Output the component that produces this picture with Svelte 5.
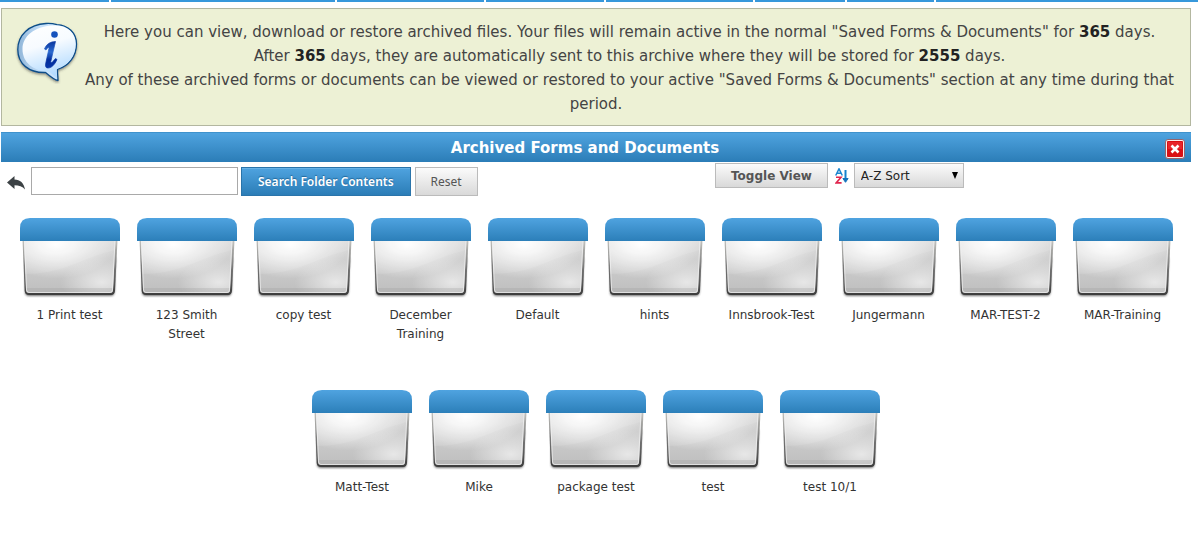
<script lang="ts">
  type Folder = { id: number; name: string };

  const names = [
    "1 Print test", "123 Smith Street", "copy test", "December Training", "Default",
    "hints", "Innsbrook-Test", "Jungermann", "MAR-TEST-2", "MAR-Training",
    "Matt-Test", "Mike", "package test", "test", "test 10/1",
  ];
  const allFolders: Folder[] = names.map((name, id) => ({ id, name }));

  let query = $state("");
  let applied = $state("");
  let sort = $state("az");
  let listView = $state(false);
  let open = $state(true);

  let folders = $derived.by(() => {
    const found = allFolders.filter((f) => f.name.toLowerCase().includes(applied.toLowerCase()));
    return sort === "za" ? found.reverse() : found;
  });

  function search(e: SubmitEvent) {
    e.preventDefault();
    applied = query.trim();
  }

  function reset() {
    query = "";
    applied = "";
  }
</script>

<div class="nav-edge">
  {#each Array(8) as _}<span></span>{/each}
</div>

<main class="page">
  <section class="notice">
    <svg class="notice-icon" viewBox="0 0 64 64" aria-hidden="true">
      <defs>
        <linearGradient id="bubble" x1="0" y1="0" x2="0.3" y2="1">
          <stop offset="0" stop-color="#fff" />
          <stop offset="0.45" stop-color="#f7fbff" />
          <stop offset="1" stop-color="#b5dcff" />
        </linearGradient>
        <linearGradient id="rim" x1="0" y1="0" x2="1" y2="0">
          <stop offset="0" stop-color="#8fb5d8" />
          <stop offset="0.4" stop-color="#c5e0fa" />
          <stop offset="1" stop-color="#d5eaff" />
        </linearGradient>
        <linearGradient id="letter" x1="0" y1="0" x2="0" y2="1">
          <stop offset="0" stop-color="#0a37a0" />
          <stop offset="0.4" stop-color="#2b6ad0" />
          <stop offset="0.7" stop-color="#002c9c" />
          <stop offset="1" stop-color="#0736a8" />
        </linearGradient>
        <filter id="drop" x="-20%" y="-20%" width="140%" height="140%">
          <feDropShadow dx="0" dy="1.5" stdDeviation="1" flood-color="#333" flood-opacity="0.5" />
        </filter>
      </defs>
      <path filter="url(#drop)" fill="url(#rim)" stroke="#0c4d88" stroke-width="1.3" stroke-linejoin="round"
        d="M31 3.500C36 3.200 39 3.800 42 4.600C53 5 61.500 13 61.500 24C61.500 36 54 46 42.500 49.500C42.300 53 43 56.500 43 60.500C39.500 60 34 55.500 30.500 52.500C14 53 2.800 44 2.800 29.500C2.800 15 14 4.500 31 3.500Z" />
      <path fill="url(#bubble)"
        d="M37 5.500C51 4.300 60.500 12 60.500 24C60.500 36 53 45.500 41.300 48.800L42 58.500L34 51.500C18 51 7.500 42.500 7.500 29C7.500 16 20 6.500 37 5.500Z" />
      <circle cx="39.500" cy="14.500" r="3.300" fill="#1653bd" />
      <path fill="url(#letter)" stroke="url(#letter)" stroke-width="0.7" stroke-linejoin="round"
        d="M29.500 29C31.500 24 35 21.800 40.500 21.500L35.800 41.500C35.400 43.500 37 43 40.500 38.500L42 39.500C39.500 45 36.500 48 32.800 48C30.500 48 30.200 45.800 30.800 43L34 28.300C34.300 26.500 32.500 27.500 31 30Z" />
    </svg>
    <p>
      Here you can view, download or restore archived files. Your files will remain active in the normal "Saved Forms &amp; Documents" for <strong>365</strong> days.<br />
      After <strong>365</strong> days, they are automatically sent to this archive where they will be stored for <strong>2555</strong> days.<br />
      Any of these archived forms or documents can be viewed or restored to your active "Saved Forms &amp; Documents" section at any time during that period.
    </p>
  </section>

  {#if open}
    <header class="title-bar">
      <h1>Archived Forms and Documents</h1>
      <button class="close" type="button" aria-label="Close" onclick={() => (open = false)}>
        <svg viewBox="0 0 20 20" aria-hidden="true">
          <rect x="0.500" y="0.500" width="19" height="19" rx="2.500" fill="#f8eeee" stroke="#94646c" />
          <rect x="2" y="2" width="16" height="16" rx="1" fill="#d90f14" />
          <rect x="3" y="3" width="14" height="7" fill="#f0333a" opacity="0.6" />
          <path d="M6.500 6.500L13.500 13.500M13.500 6.500L6.500 13.500" stroke="#fff" stroke-width="2.600" />
        </svg>
      </button>
    </header>

    <div class="toolbar">
      <form class="search" onsubmit={search}>
        <button class="back" type="button" aria-label="Back">
          <svg viewBox="0 0 18 14" aria-hidden="true">
            <path fill="#3c4245" d="M0 6.500L7.500 0V3.500C13 3.500 17 7 18 13.500C15.500 10.300 12 9.300 7.500 9.300V13Z" />
          </svg>
        </button>
        <input type="text" aria-label="Search folder contents" bind:value={query} />
        <button class="btn primary" type="submit">Search Folder Contents</button>
        <button class="btn plain reset" type="button" onclick={reset}>Reset</button>
      </form>
      <div class="view">
        <button class="btn plain toggle" type="button" onclick={() => (listView = !listView)}>Toggle View</button>
        <svg class="sort-icon" viewBox="0 0 14 16" aria-hidden="true">
          <path d="M0.700 7.500L4 0.800L7.300 7.500M1.900 5.300H6.100" fill="none" stroke="#1b86cf" stroke-width="1.500" />
          <path d="M1 9.300H6L1.200 14.900H6.600" fill="none" stroke="#e0264e" stroke-width="1.600" />
          <path d="M10.500 2V12" stroke="#1683cd" stroke-width="2" />
          <path d="M7.900 10.500L10.500 14.300L13.100 10.500Z" fill="#1673bd" stroke="#1673bd" />
        </svg>
        <div class="select">
          <select aria-label="Sort order" bind:value={sort}>
            <option value="az">A-Z Sort</option>
            <option value="za">Z-A Sort</option>
          </select>
        </div>
      </div>
    </div>

    <svg class="defs" aria-hidden="true">
      <defs>
        <linearGradient id="lid" x1="0" y1="0" x2="0" y2="1">
          <stop offset="0" stop-color="#4fa3e0" />
          <stop offset="1" stop-color="#2c7fb9" />
        </linearGradient>
        <linearGradient id="bin" x1="0" y1="0" x2="0" y2="1">
          <stop offset="0" stop-color="#dcdcdc" />
          <stop offset="0.6" stop-color="#c8c8c8" />
          <stop offset="1" stop-color="#bfbfbf" />
        </linearGradient>
        <radialGradient id="shine" cx="0.35" cy="0.08" r="0.65">
          <stop offset="0" stop-color="#fff" />
          <stop offset="0.3" stop-color="#fff" stop-opacity="0.75" />
          <stop offset="1" stop-color="#fff" stop-opacity="0" />
        </radialGradient>
        <radialGradient id="glow" cx="0.85" cy="0.8" r="0.45">
          <stop offset="0" stop-color="#fff" stop-opacity="0.6" />
          <stop offset="1" stop-color="#fff" stop-opacity="0" />
        </radialGradient>
        <linearGradient id="edge" x1="0" y1="0" x2="0" y2="1">
          <stop offset="0" stop-color="#c4c4c0" />
          <stop offset="0.5" stop-color="#777" />
          <stop offset="1" stop-color="#3c3c3c" />
        </linearGradient>
        <filter id="soft" x="-10%" y="-10%" width="120%" height="120%">
          <feGaussianBlur stdDeviation="0.900" />
        </filter>
      </defs>
    </svg>

    <ul class="folders" class:list={listView}>
      {#each folders as folder (folder.id)}
        <li>
          <a href="#folder-{folder.id}">
            <svg viewBox="0 0 100 80" aria-hidden="true">
              <path fill="#333" opacity="0.7" filter="url(#soft)" d="M5 40H95.500L94.500 74Q94 78 91 78H9Q5 78 5 74Z" />
              <path fill="url(#edge)" d="M2.500 22H97.500L95 73Q94.500 77 91 77H9Q5 77 4.700 73Z" />
              <path fill="url(#bin)" d="M4 22H95.500L93 72Q93 75 90 75H9Q6 75 6 72Z" />
              <path fill="url(#shine)" d="M4 22H95.500L93 72Q93 75 90 75H9Q6 75 6 72Z" />
              <path fill="url(#glow)" d="M4 22H95.500L93 72Q93 75 90 75H9Q6 75 6 72Z" />
              <path fill="#fff" opacity="0.1" d="M4 22H95.500L95 32Q75 37 55 46Q30 56 5 56Z" />
              <path fill="#999" opacity="0.25" d="M6 70H93V72Q93 75 90 75H9Q6 75 6 72Z" />
              <path fill="none" stroke="#f2f2f2" opacity="0.7" d="M4.500 23L6.500 72Q7 74.500 9 74.500H90Q92.500 74.500 92.500 72L95 23" />
              <path fill="url(#lid)" d="M0 23V10Q0 0 10 0H90Q100 0 100 10V23Z" />
            </svg>
            <span>{folder.name}</span>
          </a>
        </li>
      {/each}
    </ul>
  {/if}
</main>

<style>
  :global(body) {
    background: #fff;
    font-family: Verdana, "DejaVu Sans", sans-serif;
    font-size: 12px;
    color: #333;
  }
  .nav-edge {
    display: grid; gap: 2px; height: 2px;
    grid-template-columns: 109fr 224fr 147fr 118fr 147fr 90fr 87fr 262fr;
  }
  .nav-edge span { background: #3798db; }
  .page { margin: 6px 7px 0 1px; }

  .notice {
    background: #edf1d5; border: 1px solid #b3b7a0;
    padding: 11px 10px 9px;
  }
  .notice-icon { float: left; width: 64px; height: 64px; margin-left: 3px; }
  .notice p {
    margin: 0; font-size: 15px; line-height: 24px;
    text-align: center; color: #444;
  }
  .notice strong { color: #222; }

  .title-bar {
    display: flex; align-items: center;
    height: 30px; margin-top: 6px; padding: 0 6px 0 4px; box-sizing: border-box;
    border-top: 1px solid #3f92cc;
    background: linear-gradient(#4fa3df, #2b7db7);
  }
  h1 {
    flex: 1; margin: 0; text-align: center;
    font-size: 15px; line-height: 20px; color: #fff;
  }
  .close {
    width: 20px; height: 20px; margin-top: 2px;
    padding: 0; border: 0; background: none; cursor: pointer;
  }
  .close svg, .back svg { display: block; width: 100%; }

  .toolbar { display: grid; grid-template-columns: 3fr 2fr; align-items: start; }
  .search { display: flex; align-items: flex-start; padding: 5px 0 0 6px; }
  .back {
    width: 18px; height: 14px; margin: 9px 6px 0 0; padding: 0;
    border: 0; background: none; cursor: pointer;
  }
  .search input {
    width: 207px; height: 28px; margin-right: 3px; padding: 0 6px;
    box-sizing: border-box; border: 1px solid #a9a9a9; background: #fff;
    font: inherit;
  }
  .btn {
    height: 29px; padding: 0 15px; box-sizing: border-box;
    font: 12px Verdana, "DejaVu Sans", sans-serif; white-space: nowrap; cursor: pointer;
  }
  .primary {
    margin-right: 4px; padding: 0 16px;
    font-family: "Noto Sans", sans-serif; font-weight: 600; color: #fff;
    border: 1px solid #2a74aa; background: linear-gradient(#4fa3df, #2b7db7);
    box-shadow: inset 0 1px #67b2e6; text-shadow: 0 -1px 1px #22679a;
  }
  .plain {
    color: #555; border: 1px solid #bbb;
    background: linear-gradient(#fbfbfb, #d9d9d9);
  }
  .reset { font-family: "Noto Sans", sans-serif; }
  .view { display: flex; align-items: center; padding-top: 1px; }
  .toggle { height: 25px; font-weight: 700; }
  .sort-icon { width: 14px; height: 16px; margin: 0 5px 0 7px; }
  .select { position: relative; }
  .select::after {
    content: ""; position: absolute; right: 6px; top: 9px;
    border: 3px solid transparent; border-top: 7px solid #000; border-bottom: 0;
    pointer-events: none;
  }
  select {
    appearance: none; display: block; width: 110px; height: 25px; padding: 0 6px;
    border: 1px solid #bbb; border-radius: 0; box-sizing: border-box;
    background: linear-gradient(#fbfbfb, #d9d9d9);
    font: inherit; color: #222;
  }

  .defs { display: block; width: 0; height: 0; }
  .folders {
    display: flex; flex-wrap: wrap; justify-content: center; column-gap: 17px;
    margin: 22px 0 0; padding: 0; list-style: none;
  }
  .folders li { width: 100px; min-height: 172px; }
  .folders a { display: block; color: #333; text-decoration: none; }
  .folders a svg { display: block; width: 100px; height: 80px; overflow: visible; }
  .folders span {
    display: block; padding: 8px 4px 0;
    line-height: 19px; text-align: center;
  }
  .list { flex-direction: column; align-items: flex-start; row-gap: 8px; padding-left: 19px; }
  .list li { width: auto; min-height: 0; }
  .list a { display: flex; align-items: center; gap: 8px; }
  .list a svg { width: 30px; height: 24px; }
  .list span { padding: 0; }
</style>
